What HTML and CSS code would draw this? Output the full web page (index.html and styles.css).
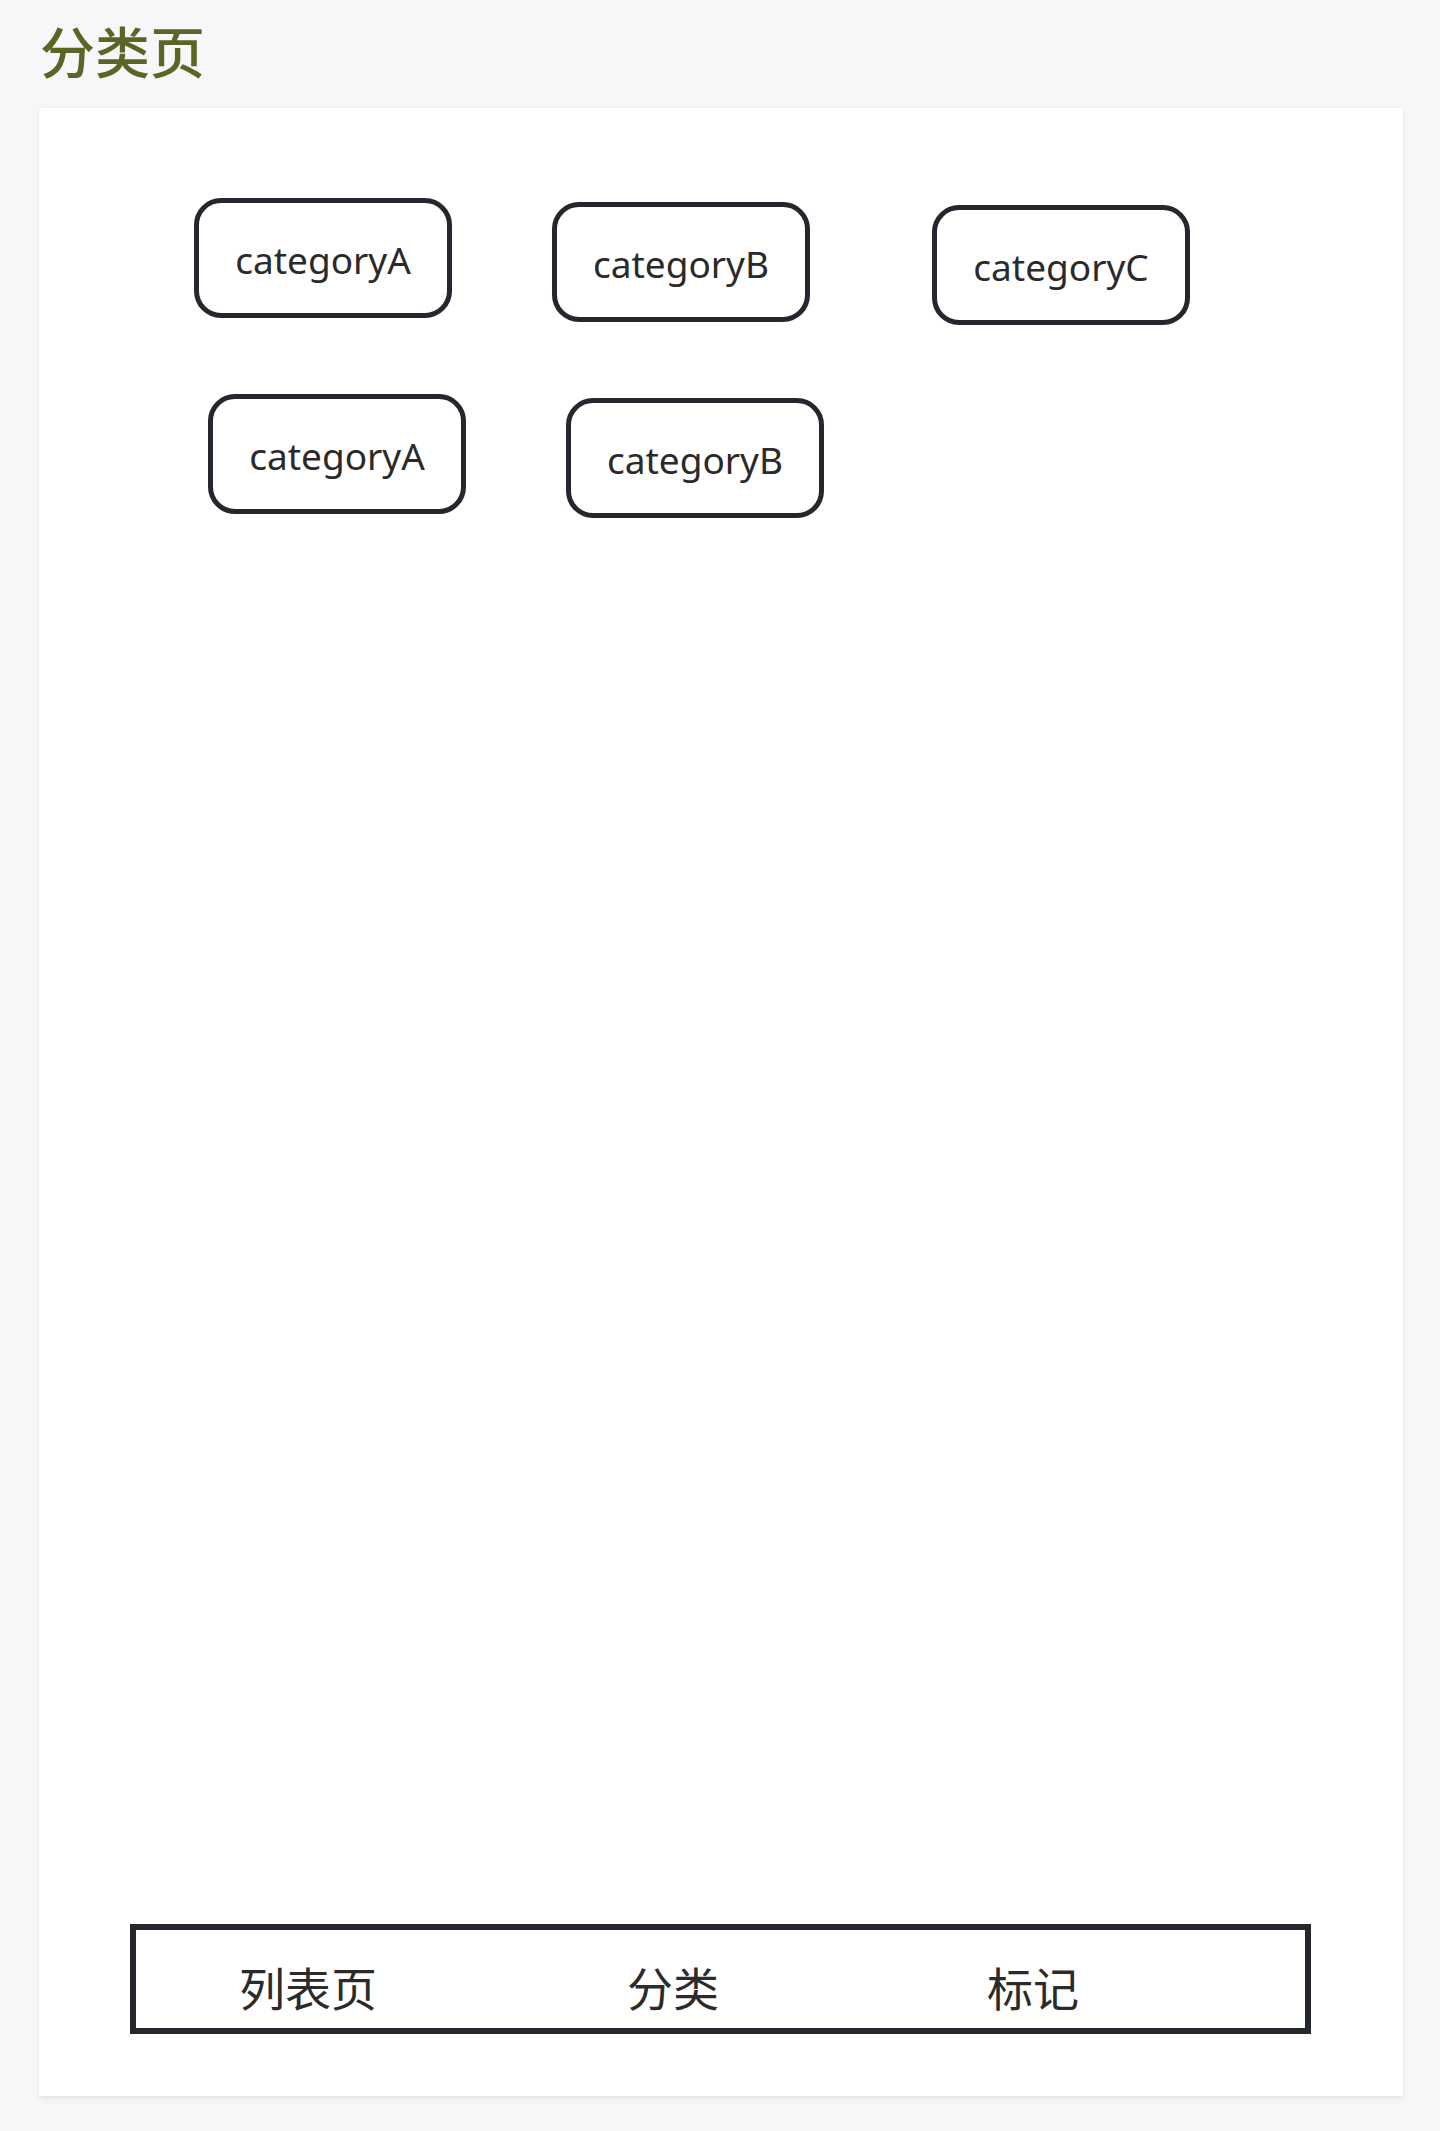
FILE: index.html
```html
<!DOCTYPE html>
<html lang="zh">
<head>
<meta charset="utf-8">
<title>分类页</title>
<link rel="stylesheet" href="styles.css">
</head>
<body>
<header class="page-head">
  <h1 class="page-title">分类页</h1>
</header>
<main class="card">
  <div class="cats">
    <div class="cat cat-1">categoryA</div>
    <div class="cat cat-2">categoryB</div>
    <div class="cat cat-3">categoryC</div>
    <div class="cat cat-4">categoryA</div>
    <div class="cat cat-5">categoryB</div>
  </div>
  <nav class="tabbar">
    <span class="tab">列表页</span>
    <span class="tab">分类</span>
    <span class="tab">标记</span>
  </nav>
</main>
</body>
</html>
```
FILE: styles.css
```css
html, body {
  margin: 0;
  padding: 0;
}
body {
  background: #f6f7f9;
  width: 1440px;
  height: 2131px;
  font-family: "Noto Sans", "Noto Sans CJK SC", sans-serif;
  overflow: hidden;
}
.page-head {
  height: 108px;
  box-sizing: border-box;
  padding: 22px 0 0 40px;
}
.page-title {
  margin: 0;
  font-family: "Noto Sans CJK SC", sans-serif;
  font-weight: 500;
  font-size: 55px;
  line-height: 1;
  color: #5b6526;
}
.card {
  margin-left: 39px;
  width: 1364px;
  height: 1988px;
  background: #ffffff;
  box-shadow: 0 3px 6px rgba(0, 0, 0, 0.07), 0 0 2px rgba(0, 0, 0, 0.04);
  display: flex;
  flex-direction: column;
  box-sizing: border-box;
}
.cats {
  display: grid;
  grid-template-columns: 358px 380px 258px;
  grid-auto-rows: 127px;
  row-gap: 69px;
  padding: 90px 0 0 155px;
}
.cat {
  width: 258px;
  height: 120px;
  box-sizing: border-box;
  border: 5px solid #24272e;
  border-radius: 27px;
  display: flex;
  align-items: center;
  justify-content: center;
  font-size: 37px;
  color: #2a2a2a;
  padding-top: 2px;
}
.cat-2 { margin-top: 4px; }
.cat-3 { margin-top: 7px; }
.cat-4 { margin-left: 14px; }
.cat-5 { margin-left: 14px; margin-top: 4px; }
.tabbar {
  margin: auto 92px 62px 91px;
  height: 110px;
  box-sizing: border-box;
  border: 6px solid #24272e;
  display: grid;
  grid-template-columns: 388px 360px auto;
  align-items: center;
  padding: 14px 0 0 103px;
}
.tab {
  font-family: "Noto Sans CJK SC", sans-serif;
  font-size: 46px;
  line-height: 1;
  color: #2b2b2b;
}
```
